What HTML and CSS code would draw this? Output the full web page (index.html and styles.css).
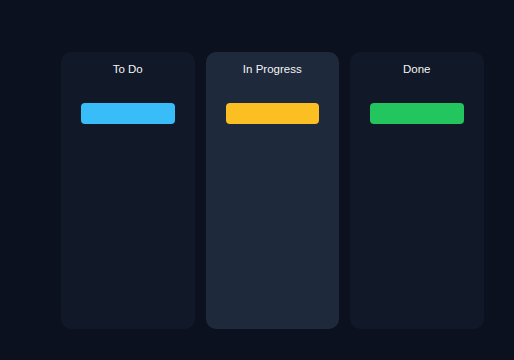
FILE: index.html
```html
<!DOCTYPE html>
<html>
<head>
<meta charset="utf-8">
<link rel="stylesheet" href="styles.css">
</head>
<body>
<div class="board">
  <div class="column">
    <div class="title">To Do</div>
    <div class="card card-blue"></div>
  </div>
  <div class="column column-active">
    <div class="title">In Progress</div>
    <div class="card card-yellow"></div>
  </div>
  <div class="column">
    <div class="title">Done</div>
    <div class="card card-green"></div>
  </div>
</div>
</body>
</html>
```
FILE: styles.css
```css
html, body {
  margin: 0;
  padding: 0;
  background: #0b111e;
  width: 514px;
  height: 360px;
  overflow: hidden;
}
.board {
  display: flex;
  gap: 11px;
  padding: 52px 30px 31px 61px;
  box-sizing: border-box;
  height: 360px;
}
.column {
  width: 133.5px;
  flex: none;
  background: #111827;
  border-radius: 10px;
  padding: 10px 20px;
  box-sizing: border-box;
  display: flex;
  flex-direction: column;
}
.column-active {
  background: #1e293b;
}
.title {
  font-family: "Liberation Sans", Arial, sans-serif;
  font-size: 11.5px;
  line-height: 14px;
  color: #f3f4f6;
  text-align: center;
}
.card {
  margin-top: 27px;
  height: 21px;
  border-radius: 4px;
}
.card-blue { background: #38bdf8; }
.card-yellow { background: #fbbf24; }
.card-green { background: #22c55e; }
```
